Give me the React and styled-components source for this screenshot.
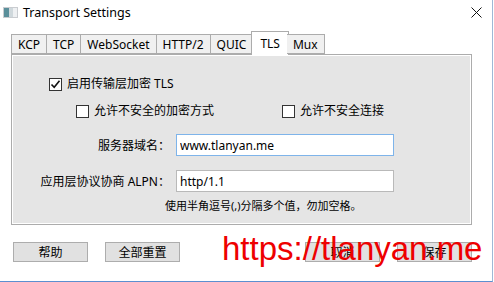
import React, { useState } from "react";
import styled, { createGlobalStyle } from "styled-components";

const GlobalStyle = createGlobalStyle`
  html, body {
    margin: 0;
    padding: 0;
    background: #ffffff;
  }
  body {
    font-family: "Segoe UI", "Noto Sans", "Noto Sans CJK SC", sans-serif;
    font-size: 12px;
    color: #000;
  }
`;

const TABS = ["KCP", "TCP", "WebSocket", "HTTP/2", "QUIC", "TLS", "Mux"];

function App() {
  const [active, setActive] = useState("TLS");
  const [tls, setTls] = useState(true);
  const [insecureCipher, setInsecureCipher] = useState(false);
  const [insecure, setInsecure] = useState(false);
  const [serverName, setServerName] = useState("www.tlanyan.me");
  const [alpn, setAlpn] = useState("http/1.1");

  return (
    <>
      <GlobalStyle />
      <Window>
        <TitleBar>
          <AppIcon width="15" height="11" viewBox="0 0 15 11">
            <rect x="0.5" y="0.5" width="14" height="10" fill="#eef0f2" stroke="#c9ccd0" />
            <rect x="1" y="1" width="5" height="9" fill="#5a8f9a" />
            <rect x="6" y="1" width="4" height="9" fill="#cfd8dc" />
          </AppIcon>
          <Title>Transport Settings</Title>
          <CloseButton aria-label="close">
            <svg width="11" height="11" viewBox="0 0 11 11">
              <path d="M0.5 0.5 L10.5 10.5 M10.5 0.5 L0.5 10.5" stroke="#111" strokeWidth="1" />
            </svg>
          </CloseButton>
        </TitleBar>

        <Body>
          <TabStrip>
            {TABS.map((t) => (
              <Tab key={t} $active={t === active} onClick={() => setActive(t)}>
                {t}
              </Tab>
            ))}
          </TabStrip>

          <Panel>
            <CheckRow $indent={37} $top={22}>
              <Check checked={tls} onChange={setTls} label="启用传输层加密 TLS" />
            </CheckRow>
            <CheckPair>
              <Check
                checked={insecureCipher}
                onChange={setInsecureCipher}
                label="允许不安全的加密方式"
              />
              <Check checked={insecure} onChange={setInsecure} label="允许不安全连接" />
            </CheckPair>

            <Form>
              <FieldRow>
                <FieldLabel>服务器域名：</FieldLabel>
                <Field
                  $focused
                  value={serverName}
                  onChange={(e) => setServerName(e.target.value)}
                />
              </FieldRow>
              <FieldRow>
                <FieldLabel>应用层协议协商 ALPN：</FieldLabel>
                <Field value={alpn} onChange={(e) => setAlpn(e.target.value)} />
              </FieldRow>
              <Hint>使用半角逗号(,)分隔多个值，勿加空格。</Hint>
            </Form>
          </Panel>

          <ButtonRow>
            <ButtonGroup>
              <Button>帮助</Button>
              <Button>全部重置</Button>
            </ButtonGroup>
            <ButtonGroup>
              <Button>取消</Button>
              <Button>保存</Button>
            </ButtonGroup>
          </ButtonRow>
        </Body>

        <Watermark>https://tlanyan.me</Watermark>
      </Window>
    </>
  );
}

function Check({ checked, onChange, label }) {
  return (
    <CheckLabel>
      <Box $checked={checked} onClick={() => onChange(!checked)}>
        {checked && (
          <svg width="11" height="11" viewBox="0 0 11 11">
            <path d="M1.5 5.5 L4.2 8.3 L9.5 1.8" fill="none" stroke="#111" strokeWidth="1.6" />
          </svg>
        )}
      </Box>
      <span>{label}</span>
    </CheckLabel>
  );
}

export default App;

const Window = styled.div`
  position: relative;
  width: 492px;
  height: 281px;
  border-right: 1px solid #9fb8d6;
  border-bottom: 1px solid #5c8fd0;
  background: #ffffff;
  overflow: hidden;
`;

const TitleBar = styled.div`
  display: flex;
  align-items: center;
  height: 24px;
  padding: 0 0 0 3px;
`;

const AppIcon = styled.svg`
  flex: none;
  margin-top: 1px;
`;

const Title = styled.div`
  margin-left: 5px;
  font-size: 12.5px;
  color: #000;
  flex: 1;
`;

const CloseButton = styled.div`
  display: flex;
  align-items: center;
  justify-content: center;
  width: 30px;
  height: 24px;
  margin-right: 1px;
`;

const Body = styled.div`
  padding: 7px 0 0 11px;
  width: 461px;
`;

const TabStrip = styled.div`
  display: flex;
  align-items: flex-end;
  height: 23px;
  position: relative;
  z-index: 1;
`;

const Tab = styled.div`
  box-sizing: border-box;
  height: ${(p) => (p.$active ? "24px" : "20px")};
  margin-bottom: ${(p) => (p.$active ? "-1px" : "0")};
  padding: 0 ${(p) => (p.$active ? "8px" : "6px")};
  margin-left: ${(p) => (p.$active ? "-2px" : "0")};
  margin-right: ${(p) => (p.$active ? "-2px" : "0")};
  display: flex;
  align-items: center;
  justify-content: center;
  font-size: 12px;
  border: 1px solid #acacac;
  border-bottom: ${(p) => (p.$active ? "none" : "1px solid #acacac")};
  border-left: ${(p) => (p.$active ? "1px solid #acacac" : "none")};
  background: ${(p) => (p.$active ? "#ffffff" : "#f0f0f0")};
  cursor: default;
  &:first-child {
    border-left: 1px solid #acacac;
  }
`;

const Panel = styled.div`
  box-sizing: border-box;
  width: 461px;
  height: 171px;
  border: 1px solid #acacac;
  box-shadow: inset 1px 1px 0 #ffffff, inset -1px -1px 0 #ffffff;
  background: #e5e5e5;
  display: flex;
  flex-direction: column;
`;

const CheckRow = styled.div`
  padding-left: ${(p) => p.$indent}px;
  margin-top: ${(p) => p.$top}px;
`;

const CheckPair = styled.div`
  display: grid;
  grid-template-columns: 206px auto;
  padding-left: 64px;
  margin-top: 13px;
`;

const CheckLabel = styled.label`
  display: flex;
  align-items: center;
  gap: 5px;
  font-size: 12px;
  height: 14px;
  line-height: 14px;
`;

const Box = styled.span`
  box-sizing: border-box;
  width: 13px;
  height: 13px;
  border: 1px solid #333333;
  background: #ffffff;
  display: flex;
  align-items: center;
  justify-content: center;
`;

const Form = styled.div`
  display: flex;
  flex-direction: column;
  gap: 14px;
  margin-top: 16px;
`;

const FieldRow = styled.div`
  display: flex;
  align-items: center;
`;

const FieldLabel = styled.div`
  width: 158px;
  margin-right: 6px;
  text-align: right;
  white-space: nowrap;
  font-size: 12px;
`;

const Field = styled.input`
  box-sizing: border-box;
  width: 218px;
  height: 22px;
  padding: 0 3px;
  font-family: "Segoe UI", "Noto Sans", "Noto Sans CJK SC", sans-serif;
  font-size: 12px;
  color: #000;
  background: #ffffff;
  border: 1px solid ${(p) => (p.$focused ? "#7eb4ea" : "#b9b9b9")};
  outline: none;
`;

const Hint = styled.div`
  margin-left: 153px;
  margin-top: -9px;
  font-size: 11px;
  white-space: nowrap;
`;

const ButtonRow = styled.div`
  display: flex;
  justify-content: space-between;
  padding: 17px 0 0 2px;
`;

const ButtonGroup = styled.div`
  display: flex;
  gap: 17px;
`;

const Button = styled.button`
  box-sizing: border-box;
  width: 75px;
  height: 20px;
  padding: 0;
  font-family: "Segoe UI", "Noto Sans", "Noto Sans CJK SC", sans-serif;
  font-size: 12px;
  color: #000;
  background: #e1e1e1;
  border: 1px solid #adadad;
  border-radius: 0;
`;

const Watermark = styled.div`
  position: absolute;
  left: 222px;
  top: 230px;
  font-family: "Liberation Sans", Arial, sans-serif;
  font-size: 33px;
  line-height: 38px;
  color: #ee0000;
  pointer-events: none;
  white-space: nowrap;
`;
